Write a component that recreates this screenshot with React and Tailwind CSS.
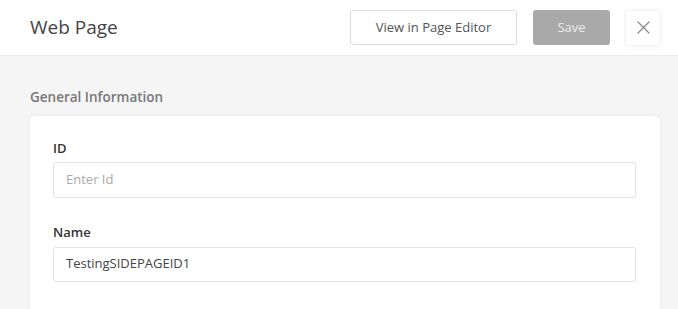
import React from "react";

export default function App() {
  return (
    <div
      className="w-[678px] h-[309px] overflow-hidden bg-[#f5f5f5] text-[#333]"
      style={{ fontFamily: '"Open Sans", "Liberation Sans", sans-serif' }}
    >
      <div className="h-[56px] bg-white border-b border-[#ebebeb] flex items-center pl-[30px] pr-[18px]">
        <h1 className="text-[19px] text-[#444] flex-1 leading-none">Web Page</h1>
        <button className="h-[35px] w-[167px] border border-[#dcdcdc] rounded-[3px] bg-white text-[13px] text-[#555]">
          View in Page Editor
        </button>
        <button className="ml-[16px] h-[35px] w-[77px] rounded-[3px] bg-[#a9a9a9] text-[13px] text-[#ececec]">
          Save
        </button>
        <button className="ml-[16px] h-[34px] w-[34px] rounded-[3px] bg-white shadow-[0_0_4px_rgba(0,0,0,0.12)] flex items-center justify-center">
          <svg width="13" height="13" viewBox="0 0 13 13" fill="none" stroke="#8a8a8a" strokeWidth="1.3" strokeLinecap="round">
            <path d="M1 1L12 12M12 1L1 12" />
          </svg>
        </button>
      </div>
      <div className="pl-[30px] pr-[18px] pt-[35px]">
        <div className="text-[13.5px] font-semibold text-[#777] leading-none">General Information</div>
        <div className="mt-[11px] bg-white rounded-[5px] shadow-[0_0_4px_rgba(0,0,0,0.06)] pl-[23px] pr-[24px] pt-[26px] pb-[30px]">
          <label className="block text-[13px] font-semibold text-[#333] leading-none">ID</label>
          <div className="mt-[7px] h-[36px] border border-[#e3e3e3] rounded-[3px] flex items-center px-[12px]">
            <span className="text-[13px] text-[#a9a9a9]">Enter Id</span>
          </div>
          <label className="block mt-[28px] text-[13px] font-semibold text-[#333] leading-none">Name</label>
          <div className="mt-[8px] h-[35px] border border-[#e3e3e3] rounded-[3px] flex items-center px-[12px]">
            <span className="text-[13px] text-[#444]">TestingSIDEPAGEID1</span>
          </div>
        </div>
      </div>
    </div>
  );
}
